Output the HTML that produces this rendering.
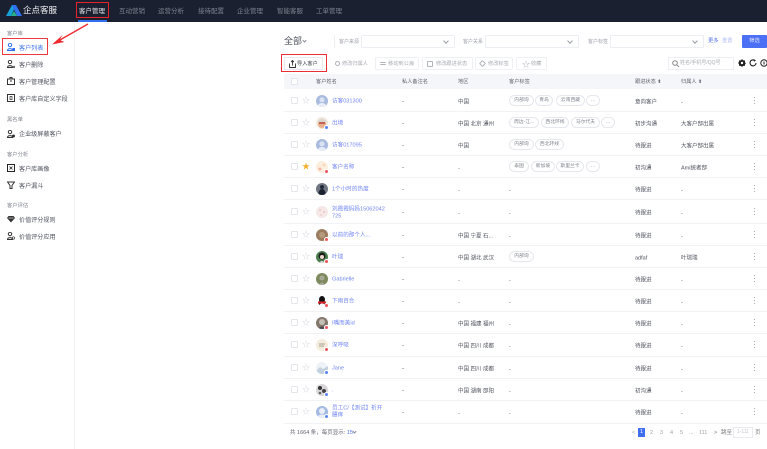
<!DOCTYPE html>
<html lang="zh"><head><meta charset="utf-8"><style>
*{box-sizing:border-box}
html,body{margin:0;padding:0;width:767px;height:449px;overflow:hidden;background:#fff;font-family:"Liberation Sans","Noto Sans CJK SC",sans-serif;color:#555b6b}
#w{position:absolute;left:0;top:0;width:767px;height:449px;overflow:hidden;filter:blur(.25px)}
.a{position:absolute;white-space:nowrap}
.nav{top:5px;height:13px;line-height:13px;font-size:6.5px;color:#7d828f;position:absolute}
.sec{left:7px;font-size:5.3px;color:#7f838d;position:absolute;line-height:8px;transform:translateY(1px)}
.it{left:19px;font-size:6.1px;color:#4f535f;position:absolute;line-height:10px;transform:translateY(2px)}
.ic{position:absolute;left:7px;width:8px;height:8px}
.lab{font-size:5px;color:#a0a4ae;position:absolute;top:38px;line-height:8px}
.sel{position:absolute;top:35px;height:13px;border:1px solid #eceef3;border-radius:1px}
.sel:after{content:"";position:absolute;right:6px;top:3px;width:3px;height:3px;border-right:1px solid #9a9ea8;border-bottom:1px solid #9a9ea8;transform:rotate(45deg)}
.btn{position:absolute;top:57px;height:13px;border:1px solid #eef0f4;border-radius:1px;font-size:5.2px;color:#a9acb5;line-height:13px;padding-left:11px;white-space:nowrap}
.btn i{position:absolute;left:4px;top:3px;width:6px;height:6px;border:1px solid #b1b4bd;border-radius:1px}
.th{position:absolute;top:78px;font-size:5.2px;line-height:9px;color:#5f6471;white-space:nowrap}
.row{position:absolute;left:284px;width:483px;border-bottom:1px solid #f1f2f6}
.cb{position:absolute;left:291px;width:7px;height:7px;border:1px solid #e5e6eb;border-radius:1px;background:#fff}
.st{position:absolute;left:302px;font-size:8px;line-height:8px;color:#d4d6dd}
.av{position:absolute;left:316px;width:12px;height:12px;border-radius:50%;overflow:hidden}
.bd{position:absolute;left:324px;width:5px;height:5px;border-radius:50%;background:#e9555b;border:1px solid #fff}
.bb{background:#5a84f0}
.n{position:absolute;left:332px;font-size:5.6px;line-height:7.4px;color:#7086f4;white-space:nowrap;transform:translateY(1.5px)}
.t{position:absolute;font-size:5.5px;line-height:8px;color:#4f535f;white-space:nowrap;transform:translateY(1.5px)}
.d{position:absolute;font-size:6px;line-height:8px;color:#555;transform:translateY(1px)}
.tg{position:absolute;height:11px;border:1px solid #e6e7ec;border-radius:6px;font-size:4.8px;line-height:9px;color:#80848f;text-align:center;white-space:nowrap;overflow:hidden}
.more{position:absolute;left:754px;width:1px;height:7px;border-top:1px solid #a6abb6;border-bottom:1px solid #a6abb6}
.more:after{content:"";position:absolute;left:0;top:2px;width:1px;height:1px;background:#a6abb6}
.pg{position:absolute;top:429px;font-size:5.5px;line-height:9px;color:#a0a4ad;white-space:nowrap}
</style></head><body><div id="w">
<div class="a" style="left:0;top:0;width:767px;height:22px;background:#1b2030"></div>
<svg class="a" style="left:6px;top:4px" width="17" height="13" viewBox="0 0 17 13"><path d="M0 12 6 1h4L5 12z" fill="#18a0d8"/><path d="M6 1h4l6 11h-5z" fill="#2f6ff0"/><path d="M5 12l3-5 3 5z" fill="#27b38a"/></svg>
<div class="a" style="left:23px;top:3px;font-size:8.5px;line-height:14px;color:#f2f3f5">企点客服</div>
<div class="nav" style="left:79px;color:#e9eaee">客户管理</div>
<div class="nav" style="left:119px">互动营销</div>
<div class="nav" style="left:158px">运营分析</div>
<div class="nav" style="left:198px">接待配置</div>
<div class="nav" style="left:237px">企业管理</div>
<div class="nav" style="left:277px">智能客服</div>
<div class="nav" style="left:316px">工单管理</div>
<div class="a" style="left:78px;top:20px;width:29px;height:2px;background:#2f6ff0"></div>
<div class="a" style="left:76px;top:2px;width:33px;height:16px;border:1px solid #e8222a"></div>

<div class="a" style="left:74px;top:22px;width:1px;height:427px;background:#f0f1f4"></div>
<div class="sec" style="top:29px">客户库</div>
<div class="a" style="left:2px;top:38px;width:46px;height:17px;border:1px solid #ee3a3f"></div>
<svg class="ic" style="top:43px" viewBox="0 0 8 8"><circle cx="3" cy="2" r="1.700" fill="none" stroke="#2f6ff0"/><path d="M.5 7.500C.5 5 5.500 5 5.500 7.500z" fill="none" stroke="#2f6ff0"/><rect x="5.500" y="5" width="2.500" height="3" fill="#2f6ff0"/></svg>
<div class="it" style="top:42px;color:#3f74ee">客户列表</div>
<svg class="ic" style="top:60px" viewBox="0 0 8 8"><circle cx="3" cy="2" r="1.700" fill="none" stroke="#333"/><path d="M.5 7.500C.5 5 5.500 5 5.500 7.500z" fill="none" stroke="#333"/><path d="M6 6l2 2M8 6 6 8" stroke="#333" stroke-width=".7"/></svg>
<div class="it" style="top:59px">客户删除</div>
<svg class="ic" style="top:77px" viewBox="0 0 8 8"><path d="M.5 2h7v5.500h-7zM3 2V.5h2V2" fill="none" stroke="#333"/><path d="M3 4h2" stroke="#333"/></svg>
<div class="it" style="top:76px">客户管理配置</div>
<svg class="ic" style="top:94px" viewBox="0 0 8 8"><path d="M.5.5h7v7h-7z" fill="none" stroke="#333"/><path d="M3 2.500h2v3H3z" fill="none" stroke="#333" stroke-width=".7"/></svg>
<div class="it" style="top:93px">客户库自定义字段</div>
<div class="sec" style="top:115px">黑名单</div>
<svg class="ic" style="top:130px" viewBox="0 0 8 8"><circle cx="3" cy="2" r="1.700" fill="none" stroke="#333"/><path d="M.5 7.500C.5 5 5.500 5 5.500 7.500z" fill="none" stroke="#333"/><circle cx="6.500" cy="6" r="1.500" fill="#333"/></svg>
<div class="it" style="top:128px">企业级屏蔽客户</div>
<div class="sec" style="top:150px">客户分析</div>
<svg class="ic" style="top:164px" viewBox="0 0 8 8"><path d="M.5.5h7v7h-7z" fill="none" stroke="#222"/><path d="M2.500 2.500l3 3M5.500 2.500l-3 3" stroke="#222" stroke-width=".8"/></svg>
<div class="it" style="top:163px">客户库画像</div>
<svg class="ic" style="top:181px" viewBox="0 0 8 8"><path d="M.5 1h7L5 4.500V7.500H3V4.500z" fill="none" stroke="#333"/></svg>
<div class="it" style="top:180px">客户漏斗</div>
<div class="sec" style="top:201px">客户评估</div>
<svg class="ic" style="top:215px" viewBox="0 0 8 8"><path d="M1.500 1h5L8 3 4 7.500 0 3z" fill="#333"/><path d="M1.500 3h5" stroke="#fff" stroke-width=".6"/></svg>
<div class="it" style="top:214px">价值评分规则</div>
<svg class="ic" style="top:232px" viewBox="0 0 8 8"><circle cx="3" cy="2" r="1.700" fill="none" stroke="#333"/><path d="M.5 7.500C.5 5 5.500 5 5.500 7.500z" fill="none" stroke="#333"/><circle cx="6.500" cy="6" r="1.200" fill="none" stroke="#333" stroke-width=".7"/></svg>
<div class="it" style="top:231px">价值评分应用</div>

<svg class="a" style="left:50px;top:22px" width="40" height="26" viewBox="0 0 40 26"><path d="M38 2 9 18.500" stroke="#ee2a2f" stroke-width="1.300" fill="none"/><path d="M2 22.500 12.500 13 9.500 18 14.500 20z" fill="#ee2a2f"/></svg>

<div class="a" style="left:284px;top:35px;font-size:9px;line-height:13px;color:#4e525e">全部</div>
<div class="a" style="left:303px;top:39px;width:3px;height:3px;border-right:1px solid #8a8e98;border-bottom:1px solid #8a8e98;transform:rotate(45deg)"></div>
<div class="a" style="left:334px;top:35px;width:1px;height:13px;background:#eceef3"></div>
<div class="lab" style="left:339px">客户来源</div><div class="sel" style="left:361px;width:94px"></div>
<div class="lab" style="left:463px">客户关系</div><div class="sel" style="left:485px;width:94px"></div>
<div class="lab" style="left:588px">客户标签</div><div class="sel" style="left:610px;width:94px"></div>
<div class="a" style="left:708px;top:37px;font-size:5.3px;line-height:8px;color:#5876ee">更多</div>
<div class="a" style="left:722px;top:37px;font-size:5.3px;line-height:8px;color:#b3c1f5">重置</div>
<div class="a" style="left:742px;top:35px;width:25px;height:13px;background:#4c70f5;border-radius:1px;color:#dfe5fd;font-size:5.3px;line-height:13px;text-align:center">筛选</div>

<div class="a" style="left:281px;top:54px;width:46px;height:18px;border:1px solid #ea2f34"></div>
<div class="btn" style="left:284px;width:39px;color:#3f434f;border-color:#e8e9ee;padding-left:12px"><svg style="position:absolute;left:4px;top:2px" width="7" height="8" viewBox="0 0 7 8"><path d="M.5 3.500v4h6v-4M3.500 5.500V.5M2 2l1.500-1.500L5 2" fill="none" stroke="#333" stroke-width=".9"/></svg>导入客户</div>
<div class="btn" style="left:330px;width:41px;border-color:#fff"><i style="border-radius:50%;width:5px;height:5px"></i>修改归属人</div>
<div class="btn" style="left:375px;width:44px;padding-left:12px"><i style="height:3px;border-left:0;border-right:0;top:4px"></i>移动到公海</div>
<div class="btn" style="left:422px;width:51px;padding-left:13px"><i></i>修改跟进状态</div>
<div class="btn" style="left:475px;width:38px;padding-left:12px"><i style="transform:rotate(45deg);width:5px;height:5px"></i>修改标签</div>
<div class="btn" style="left:516px;width:31px;padding-left:14px"><span style="position:absolute;left:5px;top:0;font-size:8px;color:#b1b4bd">☆</span>收藏</div>
<div class="a" style="left:668px;top:57px;width:66px;height:13px;border:1px solid #eceef3;font-size:5px;line-height:11px;color:#a9adb6;padding-left:11px">姓名/手机号/QQ号</div>
<svg class="a" style="left:672px;top:60px" width="7" height="7" viewBox="0 0 7 7"><circle cx="3" cy="3" r="2.300" fill="none" stroke="#888"/><path d="M5 5l2 2" stroke="#888"/></svg>
<svg class="a" style="left:738px;top:59px" width="29" height="8" viewBox="0 0 29 8"><path d="M4 0 5 1.200 7 1.500 7 3.500 8 4 7 5.500 7 6.800 5 7 4 8 3 7 1 6.800 1 5 0 4 1 3 1 1.500 3 1.200z" fill="#222"/><circle cx="4" cy="4" r="1.200" fill="#fff"/><path d="M16.500 1.300a3 3 0 1 0 1.500 2.700" fill="none" stroke="#222" stroke-width="1.100"/><path d="M15.500 0l2.500 1.500-2 1.200z" fill="#222"/><circle cx="26" cy="4" r="3.200" fill="none" stroke="#222"/><path d="M26 2.500v3" stroke="#222"/></svg>

<div class="a" style="left:284px;top:74px;width:483px;height:15px;background:#f5f6f9"></div>
<div class="cb" style="top:78px"></div>
<div class="th" style="left:316px">客户姓名</div>
<div class="th" style="left:402px">私人备注名</div>
<div class="th" style="left:458px">地区</div>
<div class="th" style="left:509px">客户标签</div>
<div class="th" style="left:635px">跟进状态 ⬍</div>
<div class="th" style="left:681px">归属人 ⬍</div>

<div class="row" style="top:89px;height:23px"></div><div class="row" style="top:112px;height:22px"></div><div class="row" style="top:134px;height:22px"></div><div class="row" style="top:156px;height:22px"></div><div class="row" style="top:178px;height:22px"></div><div class="row" style="top:200px;height:24px"></div><div class="row" style="top:224px;height:22px"></div><div class="row" style="top:246px;height:22px"></div><div class="row" style="top:268px;height:22px"></div><div class="row" style="top:290px;height:22px"></div><div class="row" style="top:312px;height:22px"></div><div class="row" style="top:334px;height:23px"></div><div class="row" style="top:357px;height:22px"></div><div class="row" style="top:379px;height:22px"></div><div class="row" style="top:401px;height:23px"></div>

<!-- row 1 -->
<div class="cb" style="top:97px"></div><div class="st" style="top:97px">☆</div>
<svg class="av" style="top:95px" viewBox="0 0 12 12"><rect width="12" height="12" fill="#a9bbdf"/><circle cx="6" cy="4.800" r="2.600" fill="#dbe3f3"/><ellipse cx="6" cy="11.500" rx="4.500" ry="3.500" fill="#e8edf7"/></svg>
<div class="n" style="top:97px">访客031300</div><div class="d" style="left:402px;top:97px">-</div><div class="t" style="left:458px;top:97px">中国</div>
<div class="tg" style="left:509px;top:95px;width:25px">内部询</div><div class="tg" style="left:535px;top:95px;width:18px">青岛</div><div class="tg" style="left:556px;top:95px;width:29px">云南西藏</div><div class="tg" style="left:586px;top:95px;width:14px">...</div>
<div class="t" style="left:635px;top:97px">意向客户</div><div class="t" style="left:681px;top:97px">-</div><div class="more" style="top:97px"></div>
<!-- row 2 -->
<div class="cb" style="top:119px"></div><div class="st" style="top:119px">☆</div>
<svg class="av" style="top:117px" viewBox="0 0 12 12"><rect width="12" height="12" fill="#efe7dc"/><circle cx="6" cy="7" r="4" fill="#e7b08d"/><path d="M2 4q4-4 8 0v1H2z" fill="#d9d6d0"/><path d="M3 6h6" stroke="#a33" stroke-width="1.200"/></svg><div class="bd bb" style="top:125px"></div>
<div class="n" style="top:119px">出境</div><div class="d" style="left:402px;top:119px">-</div><div class="t" style="left:458px;top:119px">中国 北京 通州</div>
<div class="tg" style="left:509px;top:117px;width:30px">周边-江...</div><div class="tg" style="left:541px;top:117px;width:28px">西北环线</div><div class="tg" style="left:571px;top:117px;width:29px">马尔代夫</div><div class="tg" style="left:601px;top:117px;width:14px">...</div>
<div class="t" style="left:635px;top:119px">初步沟通</div><div class="t" style="left:681px;top:119px">大客户部出属</div><div class="more" style="top:119px"></div>
<!-- row 3 -->
<div class="cb" style="top:141px"></div><div class="st" style="top:141px">☆</div>
<svg class="av" style="top:139px" viewBox="0 0 12 12"><rect width="12" height="12" fill="#a9bbdf"/><circle cx="6" cy="4.800" r="2.600" fill="#dbe3f3"/><ellipse cx="6" cy="11.500" rx="4.500" ry="3.500" fill="#e8edf7"/></svg>
<div class="n" style="top:141px">访客017095</div><div class="d" style="left:402px;top:141px">-</div><div class="t" style="left:458px;top:141px">中国</div>
<div class="tg" style="left:509px;top:139px;width:25px">内部询</div><div class="tg" style="left:535px;top:139px;width:29px">西北环线</div>
<div class="t" style="left:635px;top:141px">待跟进</div><div class="t" style="left:681px;top:141px">大客户部出属</div><div class="more" style="top:141px"></div>
<!-- row 4 -->
<div class="cb" style="top:163px"></div><div class="st" style="top:163px;color:#f5b12d">★</div>
<svg class="av" style="top:161px" viewBox="0 0 12 12"><rect width="12" height="12" fill="#fbeedd"/><circle cx="4" cy="8" r="1.500" fill="#f3b4a5"/><circle cx="8" cy="4" r="1.300" fill="#f6d2b5"/></svg><div class="bd" style="top:169px"></div>
<div class="n" style="top:163px">客户名称</div><div class="d" style="left:402px;top:163px">-</div><div class="t" style="left:458px;top:163px">-</div>
<div class="tg" style="left:509px;top:161px;width:20px">泰国</div><div class="tg" style="left:531px;top:161px;width:24px">新加坡</div><div class="tg" style="left:556px;top:161px;width:28px">斯里兰卡</div><div class="tg" style="left:586px;top:161px;width:14px">...</div>
<div class="t" style="left:635px;top:163px">初沟通</div><div class="t" style="left:681px;top:163px">Ami统者部</div><div class="more" style="top:163px"></div>
<!-- row 5 -->
<div class="cb" style="top:185px"></div><div class="st" style="top:185px">☆</div>
<svg class="av" style="top:183px" viewBox="0 0 12 12"><rect width="12" height="12" fill="#6f7682"/><circle cx="6" cy="4" r="2" fill="#1f2a38"/><path d="M2.500 12q0-6 3.500-6t3.500 6z" fill="#1a2230"/></svg>
<div class="n" style="top:185px">1个小时的热度</div><div class="d" style="left:402px;top:185px">-</div><div class="t" style="left:458px;top:185px">-</div><div class="t" style="left:509px;top:185px">-</div>
<div class="t" style="left:635px;top:185px">待跟进</div><div class="t" style="left:681px;top:185px">-</div><div class="more" style="top:185px"></div>
<!-- row 6 -->
<div class="cb" style="top:208px"></div><div class="st" style="top:208px">☆</div>
<svg class="av" style="top:206px" viewBox="0 0 12 12"><rect width="12" height="12" fill="#f5e8e6"/><circle cx="4" cy="4" r=".7" fill="#dba8a4"/><circle cx="8" cy="6" r=".7" fill="#dba8a4"/><circle cx="5" cy="9" r=".7" fill="#e6c0bb"/></svg>
<div class="n" style="top:205px">刘霞霞妈妈15062042<br>725</div><div class="d" style="left:402px;top:208px">-</div><div class="t" style="left:458px;top:208px">-</div><div class="t" style="left:509px;top:208px">-</div>
<div class="t" style="left:635px;top:208px">待跟进</div><div class="t" style="left:681px;top:208px">-</div><div class="more" style="top:208px"></div>
<!-- row 7 -->
<div class="cb" style="top:231px"></div><div class="st" style="top:231px">☆</div>
<svg class="av" style="top:229px" viewBox="0 0 12 12"><rect width="12" height="12" fill="#9c7c5f"/><circle cx="6" cy="6" r="3" fill="#b59a7e"/></svg><div class="bd" style="top:237px"></div>
<div class="n" style="top:231px">以前的那个人...</div><div class="d" style="left:402px;top:231px">-</div><div class="t" style="left:458px;top:231px">中国 宁夏 石...</div><div class="t" style="left:509px;top:231px">-</div>
<div class="t" style="left:635px;top:231px">待跟进</div><div class="t" style="left:681px;top:231px">-</div><div class="more" style="top:231px"></div>
<!-- row 8 -->
<div class="cb" style="top:253px"></div><div class="st" style="top:253px">☆</div>
<svg class="av" style="top:251px" viewBox="0 0 12 12"><rect width="12" height="12" fill="#4d8050"/><circle cx="6" cy="5" r="3.500" fill="#1d1d1d"/><circle cx="6" cy="6" r="2" fill="#eed9cc"/><path d="M3 12q3-4 6 0z" fill="#ddd"/></svg><div class="bd" style="top:259px"></div>
<div class="n" style="top:253px">叶瑞</div><div class="d" style="left:402px;top:253px">-</div><div class="t" style="left:458px;top:253px">中国 湖北 武汉</div>
<div class="tg" style="left:509px;top:251px;width:25px">内部询</div>
<div class="t" style="left:635px;top:253px">adfaf</div><div class="t" style="left:681px;top:253px">叶瑞瑞</div><div class="more" style="top:253px"></div>
<!-- row 9 -->
<div class="cb" style="top:275px"></div><div class="st" style="top:275px">☆</div>
<svg class="av" style="top:273px" viewBox="0 0 12 12"><rect width="12" height="12" fill="#7d8a5e"/><circle cx="6" cy="5" r="2.500" fill="#a9a99a"/><path d="M3 12q3-5 6 0z" fill="#a9a99a"/></svg>
<div class="n" style="top:275px">Gabrielle</div><div class="d" style="left:402px;top:275px">-</div><div class="t" style="left:458px;top:275px">-</div><div class="t" style="left:509px;top:275px">-</div>
<div class="t" style="left:635px;top:275px">待跟进</div><div class="t" style="left:681px;top:275px">-</div><div class="more" style="top:275px"></div>
<!-- row 10 -->
<div class="cb" style="top:297px"></div><div class="st" style="top:297px">☆</div>
<svg class="av" style="top:295px" viewBox="0 0 12 12"><rect width="12" height="12" fill="#fff"/><ellipse cx="6" cy="4.500" rx="3" ry="3.500" fill="#111"/><ellipse cx="6" cy="8" rx="3.500" ry="3" fill="#111"/><path d="M2 6.500h8v2H2z" fill="#e3242b"/><ellipse cx="6" cy="10" rx="2.500" ry="1.500" fill="#fff"/></svg><div class="bd" style="top:303px"></div>
<div class="n" style="top:297px">下雨百合</div><div class="d" style="left:402px;top:297px">-</div><div class="t" style="left:458px;top:297px">-</div><div class="t" style="left:509px;top:297px">-</div>
<div class="t" style="left:635px;top:297px">待跟进</div><div class="t" style="left:681px;top:297px">-</div><div class="more" style="top:297px"></div>
<!-- row 11 -->
<div class="cb" style="top:319px"></div><div class="st" style="top:319px">☆</div>
<svg class="av" style="top:317px" viewBox="0 0 12 12"><rect width="12" height="12" fill="#84786d"/><circle cx="6" cy="5" r="3" fill="#c4bdb4"/><path d="M2 12q4-5 8 0z" fill="#4c4a50"/></svg><div class="bd" style="top:325px"></div>
<div class="n" style="top:319px">I嘴而美id</div><div class="d" style="left:402px;top:319px">-</div><div class="t" style="left:458px;top:319px">中国 福建 福州</div><div class="t" style="left:509px;top:319px">-</div>
<div class="t" style="left:635px;top:319px">待跟进</div><div class="t" style="left:681px;top:319px">-</div><div class="more" style="top:319px"></div>
<!-- row 12 -->
<div class="cb" style="top:341px"></div><div class="st" style="top:341px">☆</div>
<svg class="av" style="top:339px" viewBox="0 0 12 12"><rect width="12" height="12" fill="#f4ecdc"/><path d="M3 5h6M3 7h5" stroke="#8f877a" stroke-width=".7"/></svg><div class="bd" style="top:347px"></div>
<div class="n" style="top:341px">深呼吸</div><div class="d" style="left:402px;top:341px">-</div><div class="t" style="left:458px;top:341px">中国 四川 成都</div><div class="t" style="left:509px;top:341px">-</div>
<div class="t" style="left:635px;top:341px">待跟进</div><div class="t" style="left:681px;top:341px">-</div><div class="more" style="top:341px"></div>
<!-- row 13 -->
<div class="cb" style="top:364px"></div><div class="st" style="top:364px">☆</div>
<svg class="av" style="top:362px" viewBox="0 0 12 12"><rect width="12" height="12" fill="#eef2f7"/><path d="M0 9l4-4 3 2 5-3v8H0z" fill="#c3d0dd"/></svg><div class="bd bb" style="top:370px"></div>
<div class="n" style="top:364px">Jane</div><div class="d" style="left:402px;top:364px">-</div><div class="t" style="left:458px;top:364px">中国 四川 成都</div><div class="t" style="left:509px;top:364px">-</div>
<div class="t" style="left:635px;top:364px">待跟进</div><div class="t" style="left:681px;top:364px">-</div><div class="more" style="top:364px"></div>
<!-- row 14 -->
<div class="cb" style="top:386px"></div><div class="st" style="top:386px">☆</div>
<svg class="av" style="top:384px" viewBox="0 0 12 12"><rect width="12" height="12" fill="#d8d6d9"/><circle cx="4" cy="4" r="2" fill="#333"/><circle cx="8" cy="7" r="2" fill="#444"/><circle cx="4" cy="9" r="1.300" fill="#666"/></svg><div class="bd bb" style="top:392px"></div>
<div class="n" style="top:386px">.</div><div class="d" style="left:402px;top:386px">-</div><div class="t" style="left:458px;top:386px">中国 湖南 邵阳</div><div class="t" style="left:509px;top:386px">-</div>
<div class="t" style="left:635px;top:386px">初沟通</div><div class="t" style="left:681px;top:386px">-</div><div class="more" style="top:386px"></div>
<!-- row 15 -->
<div class="cb" style="top:408px"></div><div class="st" style="top:408px">☆</div>
<svg class="av" style="top:406px" viewBox="0 0 12 12"><rect width="12" height="12" fill="#a3bbe2"/><circle cx="6" cy="5" r="3" fill="#e9eef8"/><ellipse cx="6" cy="12" rx="5" ry="3.500" fill="#e9eef8"/></svg><div class="bd bb" style="top:414px"></div>
<div class="n" style="top:404px">员工C/【测试】折开<br>腰痒</div><div class="d" style="left:402px;top:408px">-</div><div class="t" style="left:458px;top:408px">-</div><div class="t" style="left:509px;top:408px">-</div>
<div class="t" style="left:635px;top:408px">待跟进</div><div class="t" style="left:681px;top:408px">-</div><div class="more" style="top:408px"></div>

<div class="a" style="left:290px;top:429px;font-size:5.5px;line-height:9px;color:#5f636d">共 1664 条，每页显示: <span style="color:#4c78e8">15</span></div>
<div class="a" style="left:353px;top:430px;width:3px;height:3px;border-right:1px solid #8a8e98;border-bottom:1px solid #8a8e98;transform:rotate(45deg)"></div>
<div class="pg" style="left:632px">&lt;</div>
<div class="a" style="left:638px;top:428px;width:7px;height:9px;background:#3f6ff0;color:#fff;font-size:5.500px;line-height:9px;text-align:center">1</div>
<div class="pg" style="left:650px">2</div><div class="pg" style="left:660px">3</div><div class="pg" style="left:670px">4</div><div class="pg" style="left:680px">5</div><div class="pg" style="left:689px">...</div><div class="pg" style="left:699px">111</div>
<div class="pg" style="left:714px;color:#777">&gt;</div><div class="pg" style="left:721px;color:#777">跳至</div>
<div class="a" style="left:733px;top:427px;width:20px;height:11px;border:1px solid #e9eaef;font-size:5px;line-height:9px;color:#c4c6cd;text-align:center">1-111</div>
<div class="pg" style="left:755px;color:#777">页</div>
</div></body></html>
